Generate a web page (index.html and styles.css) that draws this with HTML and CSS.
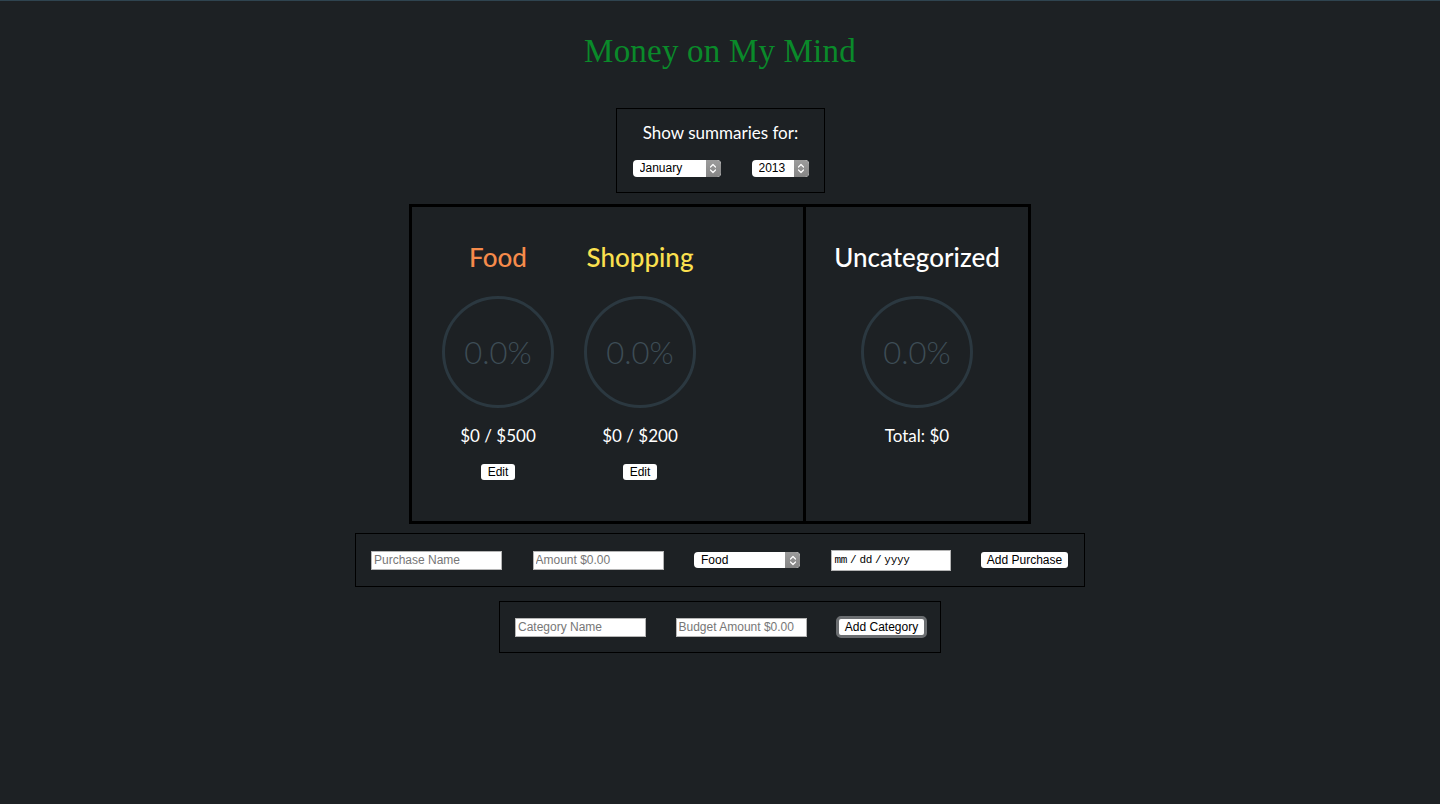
FILE: index.html
```html
<!DOCTYPE html>
<html lang="en">
<head>
<meta charset="utf-8">
<title>Money on My Mind</title>
<link rel="stylesheet" href="styles.css">
</head>
<body>
<div class="page">
  <h1 class="title">Money on My Mind</h1>

  <section class="summary-box">
    <div class="summary-label">Show summaries for:</div>
    <div class="summary-selects">
      <span class="sel sel-month">
        <select><option>January</option></select>
        <span class="sel-arrow"><svg width="8" height="11" viewBox="0 0 8 11"><path d="M1.5 4 L4 1.5 L6.5 4 M1.5 7 L4 9.5 L6.5 7" fill="none" stroke="#fff" stroke-width="1.2" stroke-linecap="round" stroke-linejoin="round"/></svg></span>
      </span>
      <span class="sel sel-year">
        <select><option>2013</option></select>
        <span class="sel-arrow"><svg width="8" height="11" viewBox="0 0 8 11"><path d="M1.5 4 L4 1.5 L6.5 4 M1.5 7 L4 9.5 L6.5 7" fill="none" stroke="#fff" stroke-width="1.2" stroke-linecap="round" stroke-linejoin="round"/></svg></span>
      </span>
    </div>
  </section>

  <section class="board">
    <div class="cats">
      <div class="cat">
        <h2 class="cat-name food">Food</h2>
        <div class="ring">0.0%</div>
        <div class="cat-amount">$0 / $500</div>
        <button class="btn btn-edit">Edit</button>
      </div>
      <div class="cat">
        <h2 class="cat-name shopping">Shopping</h2>
        <div class="ring">0.0%</div>
        <div class="cat-amount">$0 / $200</div>
        <button class="btn btn-edit">Edit</button>
      </div>
    </div>
    <div class="uncat">
      <div class="cat">
        <h2 class="cat-name">Uncategorized</h2>
        <div class="ring">0.0%</div>
        <div class="cat-amount">Total: $0</div>
      </div>
    </div>
  </section>

  <form class="form-box purchase-form">
    <input class="field" type="text" placeholder="Purchase Name">
    <input class="field" type="text" placeholder="Amount $0.00">
    <span class="sel sel-cat">
      <select><option>Food</option><option>Shopping</option></select>
      <span class="sel-arrow"><svg width="8" height="11" viewBox="0 0 8 11"><path d="M1.5 4 L4 1.5 L6.5 4 M1.5 7 L4 9.5 L6.5 7" fill="none" stroke="#fff" stroke-width="1.2" stroke-linecap="round" stroke-linejoin="round"/></svg></span>
    </span>
    <div class="field field-date"><span>mm</span><span class="slash">/</span><span>dd</span><span class="slash">/</span><span>yyyy</span></div>
    <button class="btn btn-add" type="button">Add Purchase</button>
  </form>

  <form class="form-box category-form">
    <input class="field" type="text" placeholder="Category Name">
    <input class="field" type="text" placeholder="Budget Amount $0.00">
    <button class="btn btn-add btn-focus" type="button">Add Category</button>
  </form>
</div>
</body>
</html>
```

FILE: styles.css
```css
* { box-sizing: border-box; }

html, body {
  margin: 0;
  padding: 0;
  background: #1d2124;
}

body {
  border-top: 1px solid #2f4450;
  min-height: 804px;
  font-family: Lato, "Open Sans", sans-serif;
  color: #ffffff;
}

.page {
  display: flex;
  flex-direction: column;
  align-items: center;
}

.title {
  margin: 30px 0 37px;
  font-family: "Liberation Serif", "DejaVu Serif", serif;
  font-weight: normal;
  font-size: 33px;
  line-height: 40px;
  color: #0a8a2a;
  letter-spacing: 0.2px;
}

.summary-box {
  width: 209px;
  border: 1px solid #000;
  padding: 14px 15px 15px 16px;
  display: flex;
  flex-direction: column;
  align-items: center;
}

.summary-label {
  font-size: 17px;
  line-height: 20px;
  margin-bottom: 17px;
}

.summary-selects {
  width: 100%;
  display: flex;
  justify-content: space-between;
}

.sel {
  position: relative;
  display: inline-flex;
  height: 17px;
  background: #fff;
  border-radius: 4px;
  overflow: hidden;
}

.sel select {
  appearance: none;
  -webkit-appearance: none;
  border: none;
  background: transparent;
  width: 100%;
  height: 100%;
  margin: 0;
  padding: 0 0 0 7px;
  font-family: "Liberation Sans", Arial, sans-serif;
  font-size: 12px;
  line-height: 17px;
  color: #000;
  outline: none;
}

.sel-arrow {
  position: absolute;
  top: 0;
  right: 0;
  width: 15px;
  height: 100%;
  border-radius: 0 4px 4px 0;
  background: linear-gradient(#9c9c9c, #858585);
  display: flex;
  align-items: center;
  justify-content: center;
}

.sel-month { width: 88px; }
.sel-year { width: 57px; }
.sel-cat { width: 106px; height: 16px; }
.sel-cat select { line-height: 16px; }

.board {
  margin-top: 11px;
  width: 622px;
  border: 3px solid #000;
  display: flex;
}

.cats {
  width: 394px;
  border-right: 3px solid #000;
  padding: 35px 15px 41px;
  display: flex;
}

.uncat {
  flex: 1;
  padding: 35px 0 41px;
  display: flex;
  justify-content: center;
}

.cat {
  width: 142px;
  display: flex;
  flex-direction: column;
  align-items: center;
}

.cat-name {
  margin: 0;
  font-size: 26px;
  font-weight: 500;
  line-height: 30px;
  color: #fff;
  white-space: nowrap;
}

.cat-name.food { color: #f68b4b; }
.cat-name.shopping { color: #fbe04f; }

.ring {
  margin-top: 24px;
  width: 112px;
  height: 112px;
  border: 3px solid #2b3840;
  border-radius: 50%;
  display: flex;
  align-items: center;
  justify-content: center;
  font-size: 31px;
  font-weight: 300;
  color: #3d4d56;
}

.cat-amount {
  margin-top: 17px;
  font-size: 17px;
  line-height: 22px;
  color: #fff;
}

.btn {
  font-family: "Liberation Sans", Arial, sans-serif;
  font-size: 12px;
  color: #000;
  background: #fff;
  border: none;
  border-radius: 3px;
  padding: 0;
  height: 16px;
  line-height: 16px;
  cursor: pointer;
}

.btn-edit {
  margin-top: 17px;
  width: 34px;
}

.form-box {
  margin: 0;
  border: 1px solid #000;
  display: flex;
  align-items: center;
  justify-content: space-between;
}

.purchase-form {
  margin-top: 9px;
  width: 730px;
  height: 54px;
  padding: 0 16px 0 15px;
}

.category-form {
  margin-top: 14px;
  width: 442px;
  height: 52px;
  padding: 0 13px 0 15px;
}

.field {
  width: 131px;
  height: 19px;
  border: 1px solid #b5b5b5;
  background: #fff;
  margin: 0;
  padding: 0 2px;
  font-family: "Liberation Sans", Arial, sans-serif;
  font-size: 12px;
  color: #000;
  outline: none;
}

.field::placeholder { color: #777; }

.field-date {
  width: 120px;
  height: 21px;
  display: flex;
  align-items: center;
  gap: 2px;
  padding: 0 3px;
  font-family: "Liberation Mono", "Courier New", monospace;
  font-size: 11px;
  letter-spacing: -0.3px;
  color: #000;
}

.field-date .slash { padding: 0 1px; }

.btn-add { width: 87px; }

.btn-focus {
  width: 91px;
  height: 22px;
  border: 3px solid #6b6e71;
  border-radius: 5px;
  line-height: 16px;
}
```
